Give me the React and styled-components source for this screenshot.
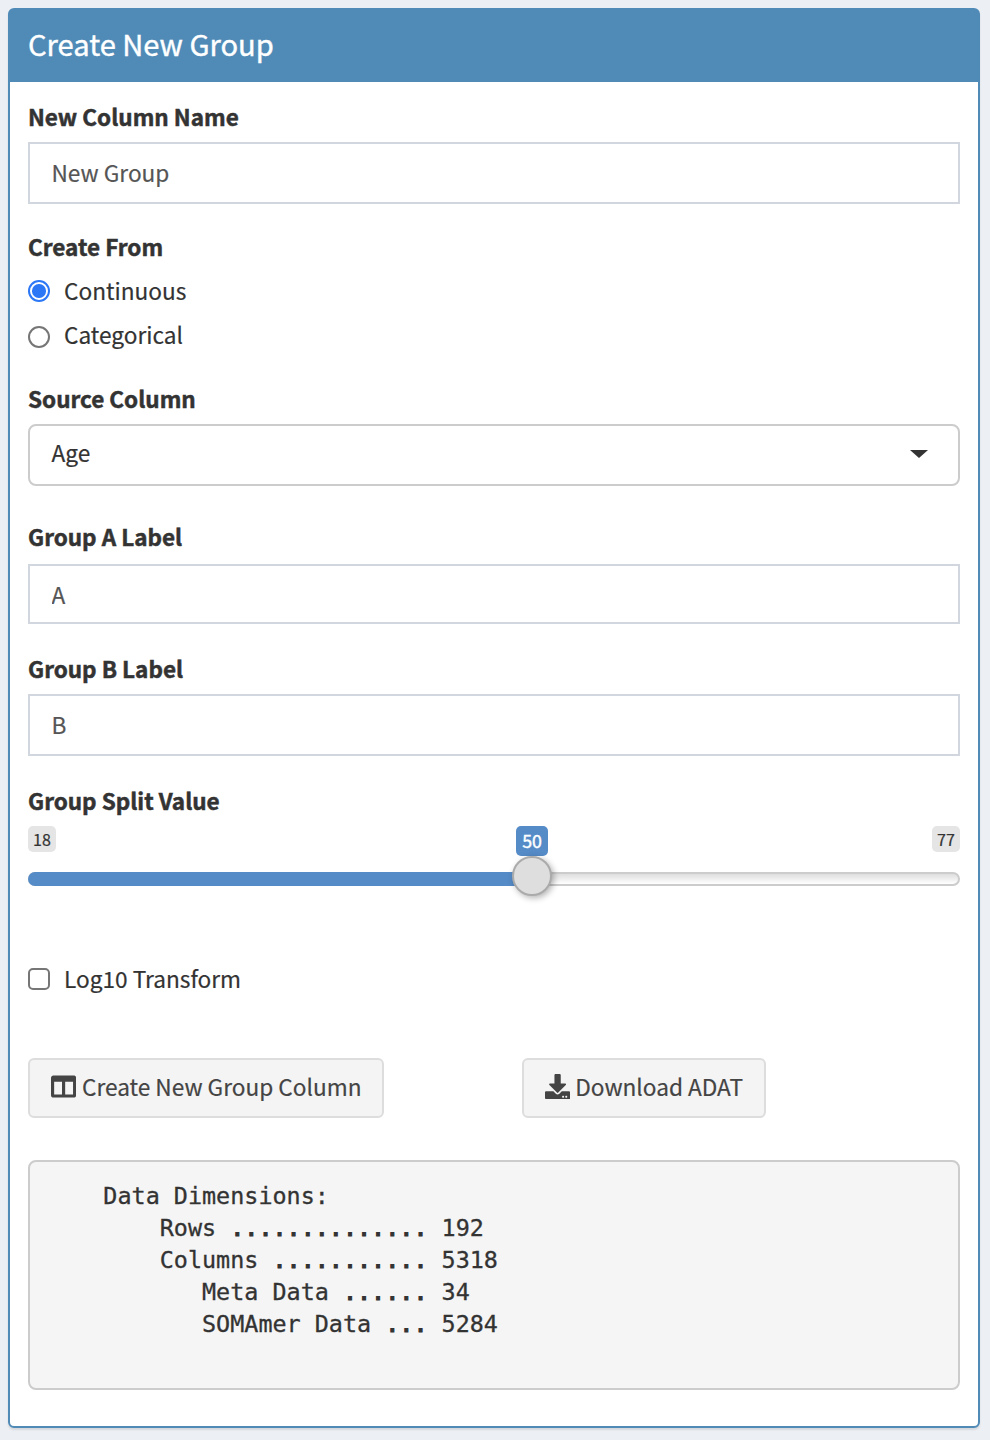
import React, { useState } from "react";
import styled, { createGlobalStyle } from "styled-components";
import { FaColumns, FaDownload } from "react-icons/fa";

const GlobalStyle = createGlobalStyle`
  * { box-sizing: border-box; }
  body {
    margin: 0;
    background: #ecf0f5;
    color: #333;
    font-family: "Noto Sans CJK SC", "Open Sans", sans-serif;
    font-size: 22.65px;
    line-height: 29px;
    -webkit-text-stroke: 0.2px currentColor;
  }
`;

const Page = styled.main`
  height: 1440px;
  padding: 8px 10px 12px 8px;
`;

const Panel = styled.section`
  height: 1420px;
  border: 2px solid #508bb8;
  border-radius: 6px;
  background: #fff;
  box-shadow: 0 2px 2px rgba(0, 0, 0, 0.1);
`;

const PanelHeader = styled.header`
  height: 72px;
  padding: 16px 18px 0;
  background: #508bb8;
`;

const Title = styled.h3`
  margin: 0;
  color: #fff;
  font-size: 29.1px;
  line-height: 34px;
  font-weight: 400;
  -webkit-text-stroke: 0.4px #fff;
`;

const PanelBody = styled.div`
  display: flex;
  flex-direction: column;
  padding: 20px 18px 0;
`;

const Field = styled.div`
  display: flex;
  flex-direction: column;
  margin-bottom: ${(p) => p.$after}px;
`;

const Label = styled.label`
  height: 28px;
  font-size: 22.5px;
  font-weight: 700;
  -webkit-text-stroke: 0.5px currentColor;
  margin-bottom: ${(p) => p.$gap ?? 12}px;
`;

const TextInput = styled.input`
  width: 100%;
  height: ${(p) => p.$height ?? 62}px;
  padding: ${(p) => p.$drop ?? 0}px 22px 1px 21.5px;
  border: 2px solid #d2d6de;
  border-radius: 0;
  background: #fff;
  color: #555;
  font: inherit;
  outline: none;
`;

const SelectBox = styled.div`
  display: flex;
  align-items: center;
  justify-content: space-between;
  height: 62px;
  padding: 0 30px 5px 21.5px;
  border: 2px solid #ccc;
  border-radius: 8px;
`;

const Caret = styled.span`
  margin-top: 3px;
  border: 9px solid transparent;
  border-top: 8px solid #333;
  border-bottom: 0;
`;

const Choice = styled.label`
  display: flex;
  align-items: flex-start;
  height: 28px;
  gap: 14px;
  margin-bottom: ${(p) => p.$after ?? 0}px;
`;

const Mark = styled.input`
  appearance: none;
  flex: none;
  display: grid;
  place-items: center;
  width: 22px;
  height: 22px;
  margin: ${(p) => p.$drop ?? 4}px 0 0;
  border: 2px solid #767676;
  border-radius: ${(p) => (p.type === "radio" ? "50%" : "5px")};
  background: #fff;

  &:checked {
    border-color: #2b77f6;
  }
  &:checked::before {
    content: "";
    width: 13.5px;
    height: 13.5px;
    border-radius: 50%;
    background: #2b77f6;
  }
`;

const Slider = styled.div`
  position: relative;
  height: 70px;
`;

const Limits = styled.div`
  display: flex;
  justify-content: space-between;
  height: 46px;
`;

const Limit = styled.span`
  width: 28px;
  height: 26px;
  border-radius: 5px;
  background: #e5e5e5;
  font-size: 16px;
  line-height: 26px;
  text-align: center;
`;

const Track = styled.div`
  height: 14px;
  border: 2px solid #ccc;
  border-radius: 7px;
  background: linear-gradient(#dedede, #fff);
`;

const Fill = styled.div`
  width: 505px;
  height: 14px;
  margin: -2px;
  border-radius: 7px 0 0 7px;
  background: #558bc7;
`;

const Value = styled.output`
  position: absolute;
  top: 0;
  left: 488px;
  width: 32px;
  height: 30px;
  border-radius: 5px;
  background: #558bc7;
  color: #fff;
  font-size: 17.8px;
  line-height: 29px;
  text-align: center;
  -webkit-text-stroke: 0.4px #fff;
`;

const Handle = styled.div`
  position: absolute;
  top: 30px;
  left: 484px;
  width: 40px;
  height: 40px;
  border: 2px solid #ababab;
  border-radius: 50%;
  background: #dedede;
  box-shadow: 2px 2px 6px rgba(0, 0, 0, 0.3);
`;

const Actions = styled.div`
  display: flex;
  gap: 138px;
  margin-bottom: 42px;
`;

const Button = styled.button`
  display: flex;
  align-items: center;
  gap: 5.5px;
  width: ${(p) => p.$width}px;
  height: 60px;
  padding: 0 0 3px ${(p) => p.$inset}px;
  border: 2px solid #ddd;
  border-radius: 6px;
  background: #f4f4f4;
  color: #444;
  font: inherit;
  white-space: nowrap;

  svg {
    flex: none;
    width: 25.2px;
    height: 25.2px;
  }
`;

const Output = styled.pre`
  height: 230px;
  margin: 0;
  padding: 18px 17px;
  border: 2px solid #ccc;
  border-radius: 8px;
  background: #f5f5f5;
  font-family: "DejaVu Sans Mono", monospace;
  font-size: 23.42px;
  line-height: 32px;
  -webkit-text-stroke: 0.3px currentColor;
`;

const Leader = styled.span`
  -webkit-text-stroke: 1.2px currentColor;
`;

const summary = [
  { name: "        Rows ", dots: 14, value: 192 },
  { name: "        Columns ", dots: 11, value: 5318 },
  { name: "           Meta Data ", dots: 6, value: 34 },
  { name: "           SOMAmer Data ", dots: 3, value: 5284 },
];

export default function App() {
  const [source, setSource] = useState("continuous");
  const [logTransform, setLogTransform] = useState(false);

  return (
    <Page>
      <GlobalStyle />
      <Panel>
        <PanelHeader>
          <Title>Create New Group</Title>
        </PanelHeader>
        <PanelBody>
          <Field $after={28}>
            <Label>New Column Name</Label>
            <TextInput defaultValue="New Group" />
          </Field>
          <Field $after={36}>
            <Label $gap={16}>Create From</Label>
            <Choice $after={16}>
              <Mark
                type="radio"
                name="source"
                checked={source === "continuous"}
                onChange={() => setSource("continuous")}
              />
              Continuous
            </Choice>
            <Choice>
              <Mark
                type="radio"
                name="source"
                $drop={6}
                checked={source === "categorical"}
                onChange={() => setSource("categorical")}
              />
              Categorical
            </Choice>
          </Field>
          <Field $after={36}>
            <Label>Source Column</Label>
            <SelectBox>
              Age
              <Caret />
            </SelectBox>
          </Field>
          <Field $after={30}>
            <Label $gap={14}>Group A Label</Label>
            <TextInput $height={60} $drop={2} defaultValue="A" />
          </Field>
          <Field $after={30}>
            <Label>Group B Label</Label>
            <TextInput defaultValue="B" />
          </Field>
          <Field $after={68}>
            <Label>Group Split Value</Label>
            <Slider>
              <Limits>
                <Limit>18</Limit>
                <Limit>77</Limit>
              </Limits>
              <Track>
                <Fill />
              </Track>
              <Value>50</Value>
              <Handle />
            </Slider>
          </Field>
          <Choice $after={66}>
            <Mark
              type="checkbox"
              checked={logTransform}
              onChange={(e) => setLogTransform(e.target.checked)}
            />
            Log10 Transform
          </Choice>
          <Actions>
            <Button $width={356} $inset={21.3}>
              <FaColumns />
              Create New Group Column
            </Button>
            <Button $width={244} $inset={20.5}>
              <FaDownload />
              Download ADAT
            </Button>
          </Actions>
          <Output>
            {"    Data Dimensions:\n"}
            {summary.map(({ name, dots, value }) => (
              <React.Fragment key={name}>
                {name}
                <Leader>{".".repeat(dots)}</Leader>
                {` ${value}\n`}
              </React.Fragment>
            ))}
          </Output>
        </PanelBody>
      </Panel>
    </Page>
  );
}
